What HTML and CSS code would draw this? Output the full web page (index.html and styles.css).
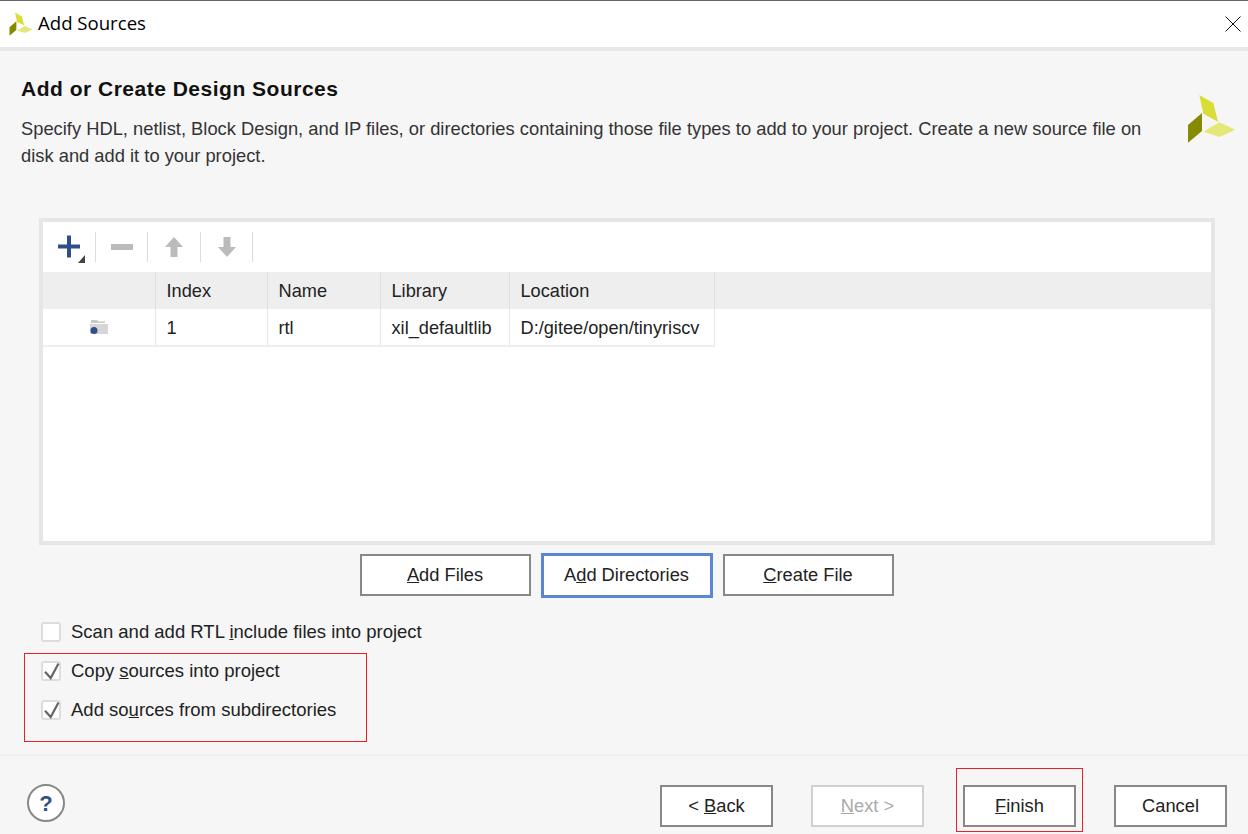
FILE: index.html
```html
<!DOCTYPE html>
<html lang="en">
<head>
  <meta charset="UTF-8" />
  <title>Add Sources</title>
  <link rel="stylesheet" href="styles.css">
</head>
<body>
  <svg class="defs" width="0" height="0">
    <symbol id="logo" viewBox="261 283 147 147">
      <polygon points="298,286 340,310 354,366 310,342" fill="#d8de37" />
      <polygon points="306,340 306,394 264,429 264,376" fill="#868a00" />
      <polygon points="310,396 358,368 406,390 358,412" fill="#e3e878" />
    </symbol>
  </svg>

  <div class="dialog">
    <div class="titlebar">
      <svg class="title-logo"><use href="#logo" /></svg>
      <span class="title-text">Add Sources</span>
      <svg class="close-icon" viewBox="0 0 16 16">
        <path d="M0.5 0.5L15.5 15.5M15.5 0.5L0.5 15.5" stroke="#111" stroke-width="1" fill="none" />
      </svg>
    </div>

    <div class="content">
      <div class="intro">
        <div class="intro-text">
          <h2>Add or Create Design Sources</h2>
          <p>Specify HDL, netlist, Block Design, and IP files, or directories containing those file types to add to your project. Create a new source file on disk and add it to your project.</p>
        </div>
        <svg class="big-logo"><use href="#logo" /></svg>
      </div>

      <div class="sources-box">
        <div class="toolbar">
          <div class="tool tool-wide">
            <svg width="32" height="32" viewBox="0 0 32 32">
              <path d="M14 4.5h4v9h9v4h-9v9h-4v-9H5v-4h9z" fill="#2f4f8a" />
              <polygon points="32,24 32,32 25,32" fill="#444" />
            </svg>
          </div>
          <div class="tool">
            <svg width="22" height="8" viewBox="0 0 22 8"><rect x="0" y="1" width="22" height="6" fill="#bbb" /></svg>
          </div>
          <div class="tool tool-wide">
            <svg width="18" height="20" viewBox="0 0 18 20"><path d="M9 0L18 10H12.5V20H5.5V10H0z" fill="#bbb" /></svg>
          </div>
          <div class="tool">
            <svg width="18" height="20" viewBox="0 0 18 20"><path d="M9 20L18 10H12.5V0H5.5V10H0z" fill="#bbb" /></svg>
          </div>
        </div>

        <table class="sources-table">
          <thead>
            <tr>
              <th class="col-icon"></th>
              <th class="col-index">Index</th>
              <th class="col-name">Name</th>
              <th class="col-lib">Library</th>
              <th class="col-loc">Location</th>
              <th class="col-fill"></th>
            </tr>
          </thead>
          <tbody>
            <tr>
              <td class="icon-cell">
                <svg width="18" height="15" viewBox="0 0 18 15">
                  <path d="M1 4V1h6L8.5 2.5H15V4z" fill="#c8c8c8" />
                  <rect x="0" y="5" width="18" height="10" fill="#d6d6d6" />
                  <circle cx="4" cy="11.5" r="3.5" fill="#2f4f8a" />
                </svg>
              </td>
              <td>1</td>
              <td>rtl</td>
              <td>xil_defaultlib</td>
              <td>D:/gitee/open/tinyriscv</td>
              <td class="fill-cell"></td>
            </tr>
          </tbody>
        </table>
      </div>

      <div class="box-buttons">
        <button class="btn btn-wide"><u>A</u>dd Files</button>
        <button class="btn btn-wide btn-focus">A<u>d</u>d Directories</button>
        <button class="btn btn-wide"><u>C</u>reate File</button>
      </div>

      <div class="options">
        <label class="option">
          <span class="check"></span>
          <span>Scan and add RTL <u>i</u>nclude files into project</span>
        </label>
        <label class="option">
          <span class="check">
            <svg width="20" height="20" viewBox="0 0 20 20"><path d="M4 10.7L9.7 17L17.5 2.5" stroke="#666" stroke-width="2.2" fill="none" /></svg>
          </span>
          <span>Copy <u>s</u>ources into project</span>
        </label>
        <label class="option">
          <span class="check">
            <svg width="20" height="20" viewBox="0 0 20 20"><path d="M4 10.7L9.7 17L17.5 2.5" stroke="#666" stroke-width="2.2" fill="none" /></svg>
          </span>
          <span>Add so<u>u</u>rces from subdirectories</span>
        </label>
      </div>
    </div>

    <div class="footer">
      <div class="help">?</div>
      <div class="footer-buttons">
        <button class="btn">&lt; <u>B</u>ack</button>
        <button class="btn btn-disabled"><u>N</u>ext &gt;</button>
        <button class="btn"><u>F</u>inish</button>
        <button class="btn">Cancel</button>
      </div>
    </div>

    <!-- red annotation boxes drawn over the dialog -->
    <div class="mark mark-options"></div>
    <div class="mark mark-finish"></div>
  </div>
</body>
</html>
```

FILE: styles.css
```css
body {
  margin: 0;
  font-family: "Liberation Sans", Arial, sans-serif;
  color: #222;
  background: #f6f6f6;
}
.defs {
  position: absolute;
}
.dialog {
  position: relative;
  display: flex;
  flex-direction: column;
  width: 1248px;
  height: 834px;
  overflow: hidden;
  box-sizing: border-box;
  background: #f6f6f6;
}
.titlebar {
  display: flex;
  align-items: center;
  height: 46px;
  padding: 0 7px 0 9px;
  background: #fff;
  border-top: 1px solid #666;
  border-bottom: 4px solid #e8e8e8;
}
.title-logo {
  width: 24px;
  height: 24px;
}
.title-text {
  margin: -3px 0 0 5px;
  font-family: "Open Sans", sans-serif;
  font-size: 18.6px;
  color: #000;
}
.close-icon {
  width: 16px;
  height: 16px;
  margin-left: auto;
}
.content {
  flex: 1;
  padding: 0 33px 0 21px;
}
.intro {
  display: flex;
  justify-content: space-between;
  height: 167px;
}
.intro h2 {
  margin: 26px 0 0;
  font-size: 21px;
  line-height: 24px;
  letter-spacing: 0.5px;
  color: #111;
}
.intro p {
  margin: 14px 0 0;
  width: 1130px;
  font-size: 18.33px;
  line-height: 27px;
  color: #333;
}
.big-logo {
  width: 49px;
  height: 49px;
  margin: 43px -21px 0 0;
  flex: none;
}
.sources-box {
  margin-left: 18px;
  height: 319px;
  border: 4px solid #e6e6e6;
  background: #fff;
}
.toolbar {
  display: flex;
  height: 40px;
  padding-top: 10px;
}
.tool {
  display: flex;
  align-items: center;
  justify-content: center;
  width: 52px;
  height: 30px;
  border-right: 1px solid #ddd;
  box-sizing: border-box;
}
.tool-wide {
  width: 53px;
}
.sources-table {
  width: 100%;
  border-collapse: collapse;
  table-layout: fixed;
  font-size: 18.2px;
}
.sources-table th {
  height: 37px;
  padding: 2px 11px 0;
  text-align: left;
  font-weight: normal;
  background: #eee;
  border-right: 1px solid #e0e0e0;
  box-sizing: border-box;
}
.sources-table td {
  height: 37px;
  padding: 2px 11px 0;
  border-right: 1px solid #e6e6e6;
  border-bottom: 2px solid #eee;
  white-space: nowrap;
  box-sizing: border-box;
}
.sources-table .col-fill {
  border-right: none;
}
.sources-table .fill-cell {
  border: none;
}
.sources-table .icon-cell {
  padding: 3px 0 0;
  text-align: center;
}
.col-icon {
  width: 112px;
}
.col-index {
  width: 112px;
}
.col-name {
  width: 113px;
}
.col-lib {
  width: 129px;
}
.col-loc {
  width: 205px;
}
.box-buttons {
  display: flex;
  justify-content: center;
  align-items: center;
  gap: 10px;
  height: 44px;
  margin: 8px 0 0 -1px;
  padding-left: 18px;
}
.btn {
  width: 113px;
  height: 42px;
  padding: 0;
  font-family: inherit;
  font-size: 18.3px;
  color: #222;
  background: #fff;
  border: 2px solid #888;
  border-radius: 0;
}
.btn-wide {
  width: 171px;
}
.btn-focus {
  width: 172px;
  height: 45px;
  border: 3px solid #5b86d6;
}
.btn-disabled {
  margin-right: 1px;
  color: #aaa;
  border-color: #d0d0d0;
}
.options {
  margin: 25px 0 0 20px;
}
.option {
  display: flex;
  align-items: center;
  gap: 10px;
  height: 20px;
  margin-bottom: 19px;
  font-size: 18.5px;
}
.check {
  display: flex;
  align-items: center;
  justify-content: center;
  width: 20px;
  height: 20px;
  box-sizing: border-box;
  background: #fff;
  border: 2px solid #ddd;
  border-radius: 3px;
}
.check svg {
  flex: none;
  margin: -2px;
}
.footer {
  display: flex;
  align-items: flex-start;
  justify-content: space-between;
  height: 50px;
  padding: 28px 21px 0 27px;
  border-top: 2px solid #eee;
}
.help {
  width: 38px;
  height: 38px;
  box-sizing: border-box;
  border: 2px solid #888;
  border-radius: 50%;
  background: #fff;
  color: #2f4f8a;
  font-size: 22px;
  font-weight: bold;
  line-height: 36px;
  text-align: center;
}
.footer-buttons {
  display: flex;
  gap: 38px;
  margin-top: 1px;
}
.mark {
  position: absolute;
  box-sizing: border-box;
  border: 1px solid #e8202a;
}
.mark-options {
  left: 24px;
  top: 653px;
  width: 343px;
  height: 89px;
}
.mark-finish {
  left: 956px;
  top: 768px;
  width: 127px;
  height: 64px;
}
```
